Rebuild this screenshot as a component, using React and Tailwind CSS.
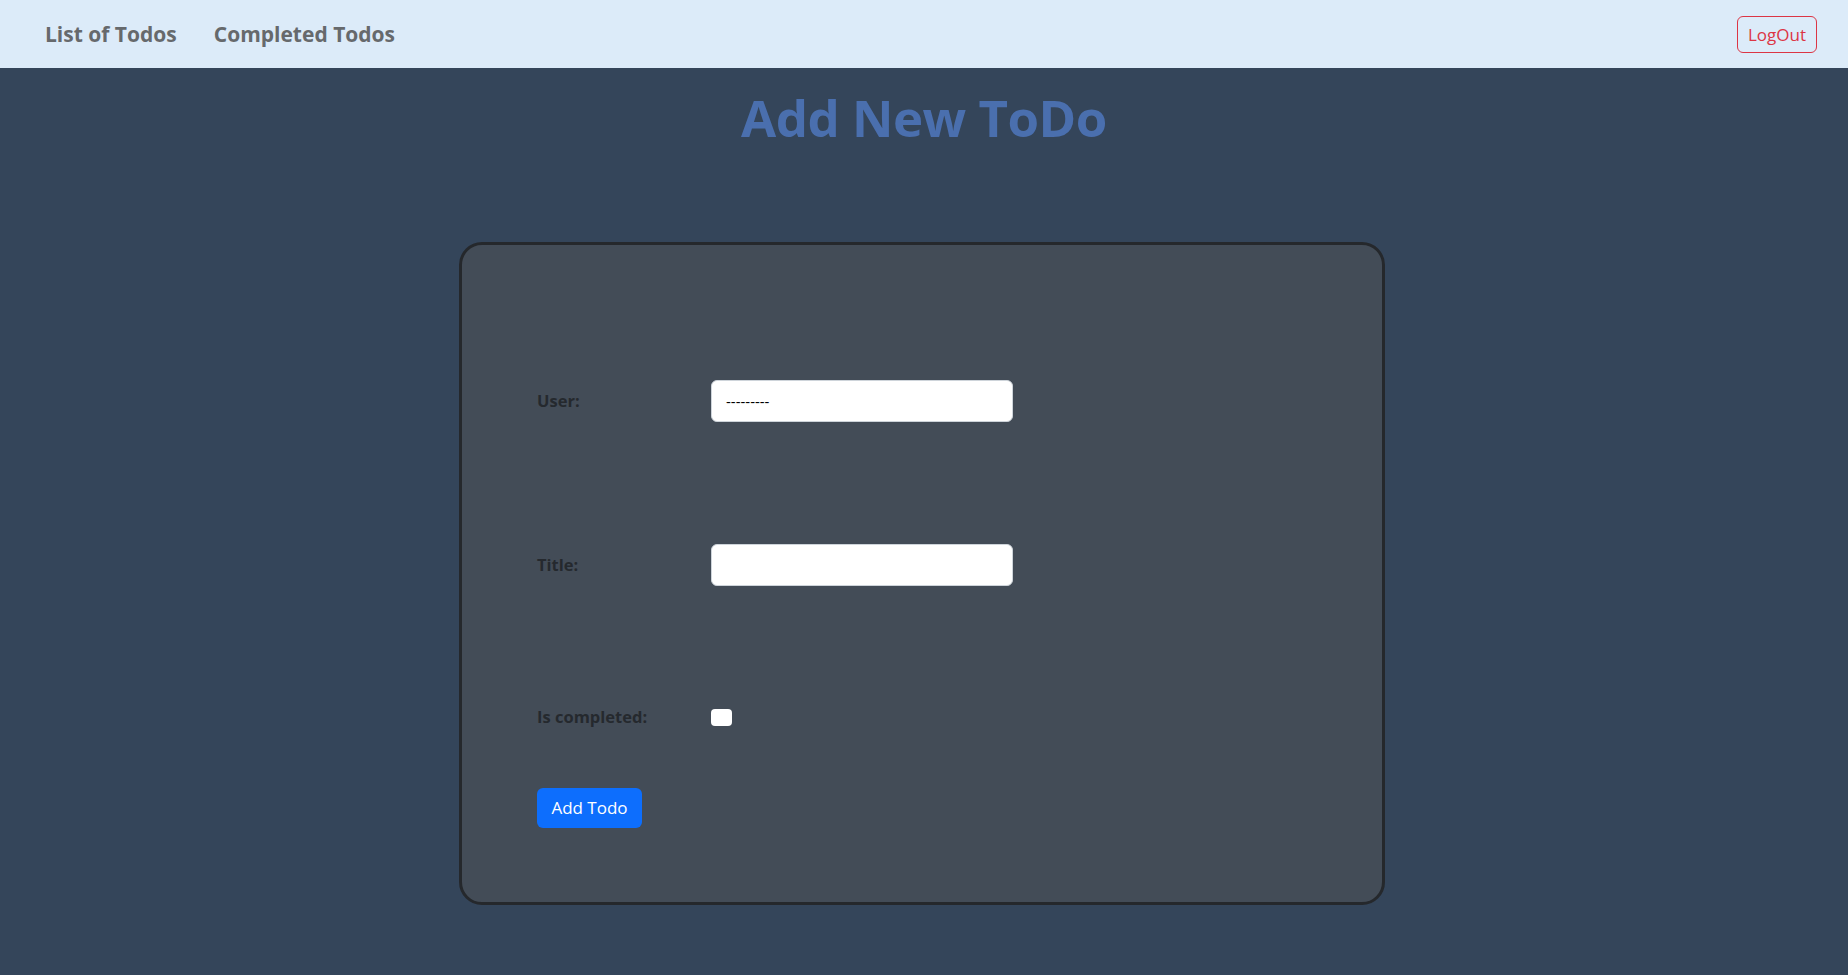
import React from "react";

export default function App() {
  return (
    <div className="min-h-screen bg-[#34455a] font-['Open_Sans',sans-serif]">
      <nav className="h-[68px] bg-[#dcebf9] flex items-center justify-between pl-[45px] pr-[31px]">
        <div className="flex items-center gap-[37px] text-[21px] font-bold text-[#66696c] pt-[2px]">
          <a className="cursor-pointer">List of Todos</a>
          <a className="cursor-pointer">Completed Todos</a>
        </div>
        <button className="h-[37px] w-[80px] rounded-[6px] border border-[#dc3545] text-[#dc3545] text-[17px] leading-none">
          LogOut
        </button>
      </nav>
      <h1 className="text-center text-[51px] font-bold text-[#4a6fae] leading-none pt-[24px] tracking-[-0.5px]">
        Add New ToDo
      </h1>
      <div className="flex justify-center pr-[4px] mt-[99px]">
        <div className="w-[926px] h-[663px] rounded-[23px] border-[3px] border-[#25282c] bg-[#434c57] pl-[75px] pt-[135px]">
          <div className="flex items-center h-[42px]">
            <label className="w-[174px] text-[16.5px] font-bold text-[#25292e]">User:</label>
            <div className="w-[302px] h-[42px] bg-white rounded-[6px] border border-[#ced4da] flex items-center px-[14px] text-[15px] text-black">
              ---------
            </div>
          </div>
          <div className="flex items-center h-[42px] mt-[122px]">
            <label className="w-[174px] text-[16.5px] font-bold text-[#25292e]">Title:</label>
            <input className="w-[302px] h-[42px] bg-white rounded-[6px] border border-[#ced4da] px-[14px] outline-none" />
          </div>
          <div className="flex items-center h-[42px] mt-[110px]">
            <label className="w-[174px] text-[16.5px] font-bold text-[#25292e]">Is completed:</label>
            <div className="w-[21px] h-[17px] bg-white rounded-[4px]" />
          </div>
          <button className="mt-[50px] h-[40px] w-[105px] rounded-[6px] bg-[#0d6efd] text-white text-[17px]">
            Add Todo
          </button>
        </div>
      </div>
    </div>
  );
}
